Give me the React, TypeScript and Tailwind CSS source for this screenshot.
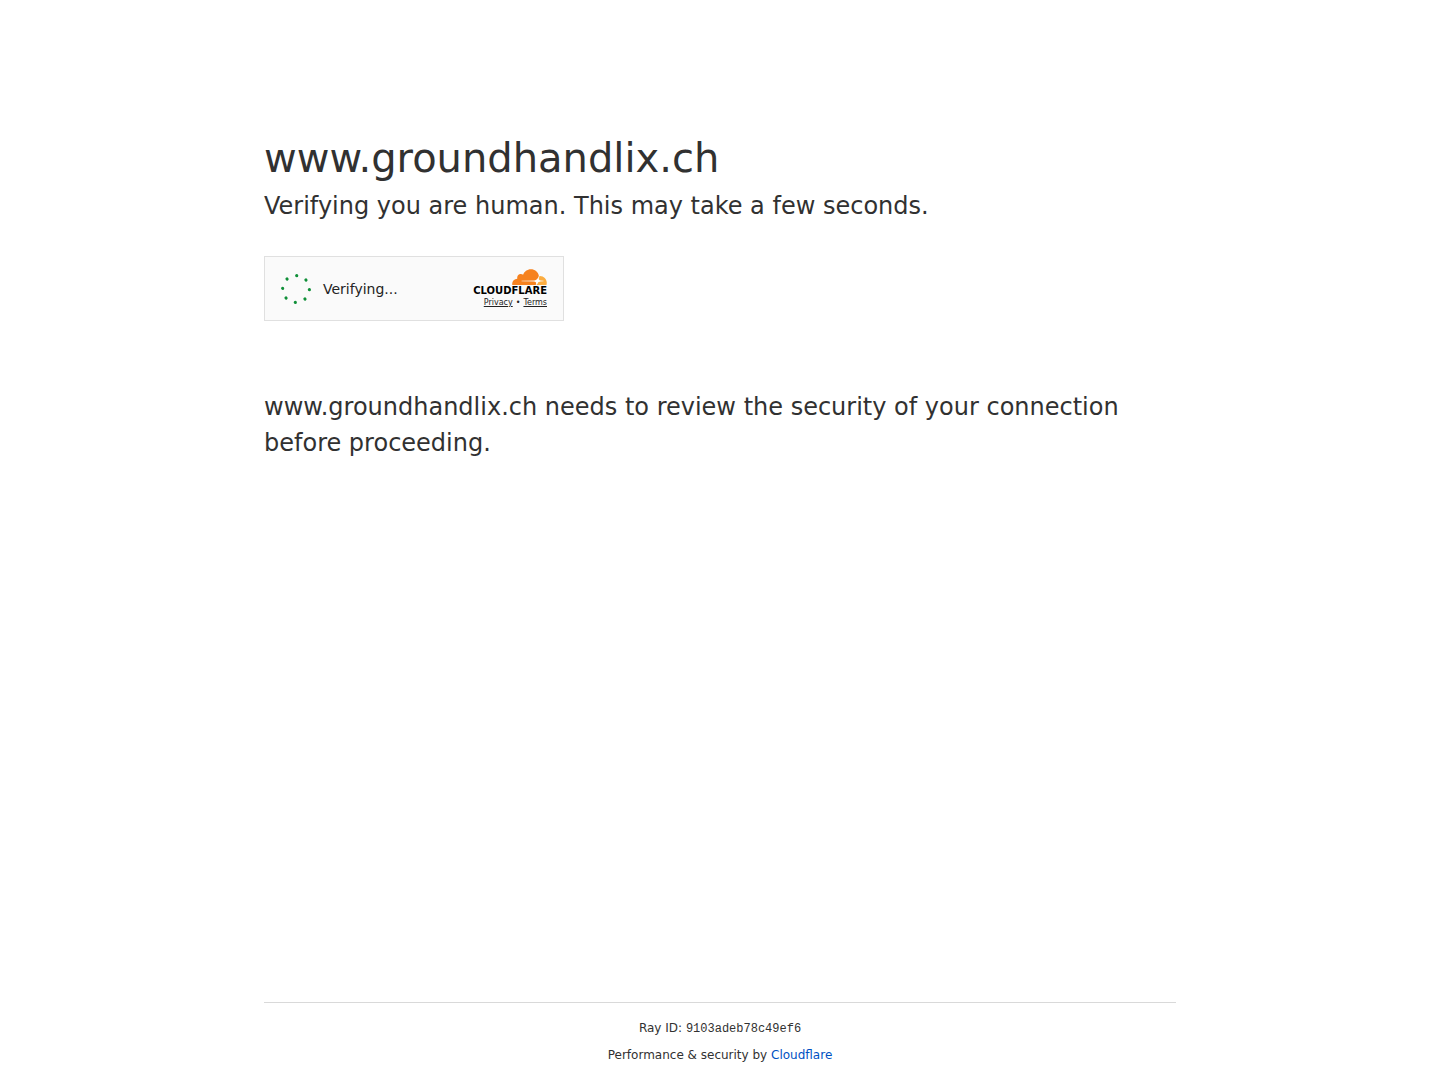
const DOTS = [3, 48, 93, 138, 183, 228, 273, 318];

function Spinner() {
  return (
    <svg viewBox="0 0 30 30" className="size-[30px]" fill="#0f8f38" aria-hidden="true">
      {DOTS.map((angle) => (
        <circle key={angle} cx="15" cy="1.6" r="1.6" transform={`rotate(${angle} 15 15)`} />
      ))}
    </svg>
  );
}

function CloudLogo() {
  return (
    <svg viewBox="0 6.4 24 11.1" className="h-4 w-[35px]" aria-hidden="true">
      <path
        fill="#f6821f"
        d="M16.5088 16.8447c.1475-.5068.0908-.9707-.1553-1.3154-.2246-.3164-.6045-.499-1.0615-.5205l-8.6592-.1123a.1559.1559 0 0 1-.1333-.0713c-.0283-.042-.0351-.0986-.021-.1553.0278-.084.1123-.1484.2036-.1562l8.7359-.1123c1.0351-.0489 2.1601-.8868 2.5537-1.9136l.499-1.3013c.0215-.0561.0293-.1128.0147-.168-.5625-2.5463-2.835-4.4453-5.5499-4.4453-2.5039 0-4.6284 1.6177-5.3876 3.8614-.4927-.3658-1.1187-.5625-1.794-.499-1.2026.119-2.1665 1.083-2.2861 2.2856-.0283.31-.0069.6128.0635.894C1.5683 13.171 0 14.7754 0 16.752c0 .1748.0142.3515.0352.5273.0141.083.0844.1475.1689.1475h15.9814c.0909 0 .1758-.0645.2032-.1553l.12-.4268z"
      />
      <path
        fill="#fbad41"
        d="M19.2656 11.2813c-.0771 0-.1611 0-.2383.0112-.0566 0-.1054.0415-.127.0976l-.3378 1.1744c-.1475.5068-.0918.9707.1543 1.3164.2256.3164.6055.498 1.0625.5195l1.8437.1133c.0557 0 .1055.0263.1329.0703.0283.043.0351.1074.0214.1562-.0283.084-.1132.1485-.204.1553l-1.921.1123c-1.041.0488-2.1582.8867-2.5527 1.914l-.1406.3585c-.0283.0713.0215.1416.0986.1416h6.5977c.0771 0 .1474-.0489.169-.126.1122-.4082.1757-.837.1757-1.2803 0-2.6025-2.125-4.727-4.7344-4.727"
      />
      <path fill="#fff" d="M17.4 12.8l.5 1.3 1.5.7-1.5.7-.5 1.4-.6-1.4-1.6-.7 1.6-.7z" />
    </svg>
  );
}

export default function App() {
  return (
    <div className="min-h-screen flex flex-col bg-white text-[#313131] font-['DejaVu_Sans',sans-serif]">
      <main className="grow w-full max-w-[960px] mx-auto px-6 pt-32">
        <h1 className="text-[40px] leading-[60px]">www.groundhandlix.ch</h1>
        <p className="text-2xl leading-9">Verifying you are human. This may take a few seconds.</p>

        <div className="my-8 max-w-[300px] flex items-center justify-between border border-[#e0e0e0] bg-[#fafafa] px-4 py-3">
          <div className="flex items-center gap-3 text-[#232323]" role="status">
            <Spinner />
            <span className="text-sm">Verifying...</span>
          </div>
          <div className="flex flex-col items-end text-[#232323]">
            <CloudLogo />
            <span className="text-[10px] leading-3 font-bold text-black">CLOUDFLARE</span>
            <div className="flex gap-[3px] text-[8px] leading-[11px]">
              <a href="#privacy" className="underline">Privacy</a>
              <span>•</span>
              <a href="#terms" className="underline">Terms</a>
            </div>
          </div>
        </div>

        <p className="pt-9 text-2xl leading-9">
          www.groundhandlix.ch needs to review the security of your connection before proceeding.
        </p>
      </main>

      <footer className="w-full max-w-[960px] mx-auto px-6 text-xs">
        <div className="flex flex-col gap-2 border-t border-[#d9d9d9] py-4 text-center leading-[18px]">
          <div>
            Ray ID: <code className="font-['Liberation_Mono',monospace]">9103adeb78c49ef6</code>
          </div>
          <div>
            Performance &amp; security by{" "}
            <a href="https://www.cloudflare.com" className="text-[#0051c3]">Cloudflare</a>
          </div>
        </div>
      </footer>
    </div>
  );
}
